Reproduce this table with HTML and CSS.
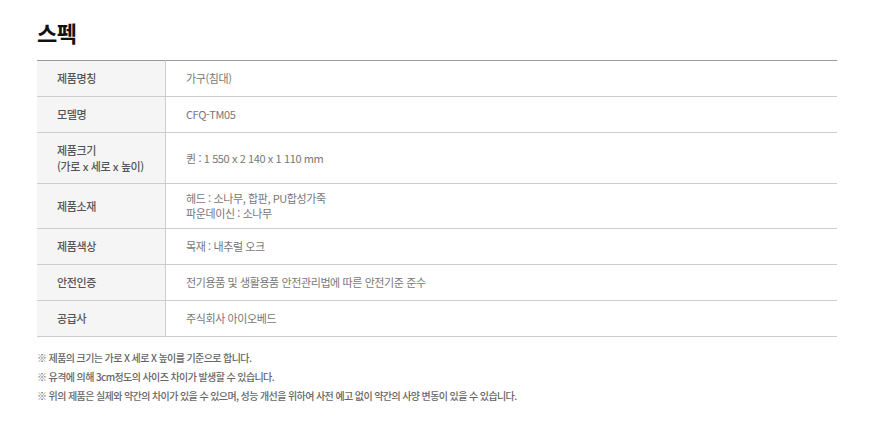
FILE: index.html
```html
<!DOCTYPE html>
<html lang="ko">
<head>
<meta charset="utf-8">
<link rel="stylesheet" href="styles.css">
</head>
<body>
<div class="wrap">
  <h2 class="title">스펙</h2>
  <table class="spec">
    <tr><th>제품명칭</th><td>가구(침대)</td></tr>
    <tr><th>모델명</th><td>CFQ-TM05</td></tr>
    <tr class="tall"><th>제품크기<br>(가로 x 세로 x 높이)</th><td>퀸 : 1 550 x 2 140 x 1 110 mm</td></tr>
    <tr><th>제품소재</th><td class="tight">헤드 : 소나무, 합판, PU합성가죽<br>파운데이신 : 소나무</td></tr>
    <tr><th>제품색상</th><td>목재 : 내추럴 오크</td></tr>
    <tr><th>안전인증</th><td>전기용품 및 생활용품 안전관리법에 따른 안전기준 준수</td></tr>
    <tr><th>공급사</th><td>주식회사 아이오베드</td></tr>
  </table>
  <ul class="notes">
    <li>※ 제품의 크기는 가로 X 세로 X 높이를 기준으로 합니다.</li>
    <li>※ 유격에 의해 3cm정도의 사이즈 차이가 발생할 수 있습니다.</li>
    <li>※ 위의 제품은 실제와 약간의 차이가 있을 수 있으며, 성능 개선을 위하여 사전 예고 없이 약간의 사양 변동이 있을 수 있습니다.</li>
  </ul>
</div>
</body>
</html>
```

FILE: styles.css
```css
html, body {
  margin: 0;
  padding: 0;
  background: #fff;
}
body {
  font-family: "Noto Sans CJK KR", "Noto Sans", sans-serif;
}
.wrap {
  width: 800px;
  margin-left: 37px;
  padding-top: 17px;
}
.title {
  margin: 0 0 13px;
  font-size: 22px;
  line-height: 30px;
  font-weight: 700;
  color: #111;
  letter-spacing: -0.5px;
}
.spec {
  width: 100%;
  border-collapse: collapse;
  border-top: 1px solid #999;
  font-size: 11px;
  letter-spacing: -0.4px;
}
.spec th, .spec td {
  border-bottom: 1px solid #ccc;
  padding: 9px 20px;
  line-height: 17px;
  text-align: left;
  vertical-align: middle;
  white-space: nowrap;
}
.spec th {
  width: 88px;
  background: #f5f5f5;
  border-right: 1px solid #ccc;
  color: #555;
  font-weight: 500;
}
.spec td {
  color: #777;
  font-weight: 400;
}
.spec tr.tall th {
  line-height: 16px;
}
.spec td.tight {
  line-height: 15px;
  padding-top: 7px;
  padding-bottom: 7px;
}
.notes {
  list-style: none;
  margin: 11px 0 0;
  padding: 0;
  font-size: 10px;
  letter-spacing: -0.6px;
  line-height: 19px;
  color: #666;
  font-weight: 500;
}
```
